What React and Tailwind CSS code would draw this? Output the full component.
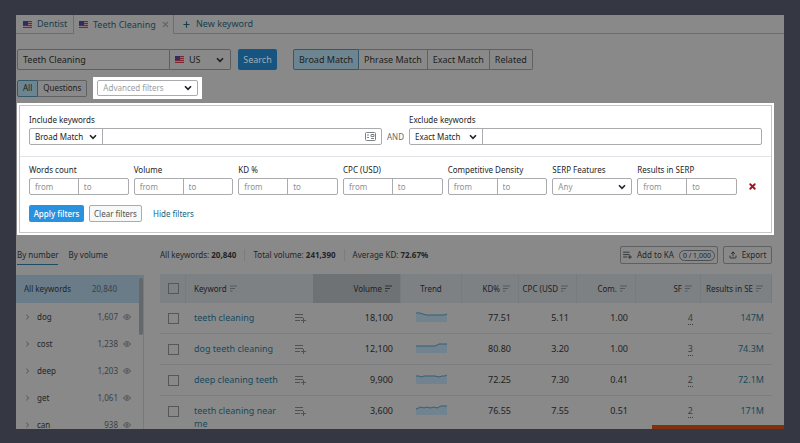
import { X, Plus, Upload } from "lucide-react";
import clsx from "clsx";

const MATCH_TYPES = ["Broad Match", "Phrase Match", "Exact Match", "Related"];

const GROUPS = [
  { name: "dog", count: "1,607" },
  { name: "cost", count: "1,238" },
  { name: "deep", count: "1,203" },
  { name: "get", count: "1,061" },
  { name: "can", count: "938" },
];

const KEYWORDS = [
  {
    keyword: "teeth cleaning",
    volume: "18,100",
    trend: "0,2 4,2 10,4 22,4 28,4 31,3",
    kd: "77.51",
    cpc: "5.11",
    com: "1.00",
    sf: 4,
    results: "147M",
  },
  {
    keyword: "dog teeth cleaning",
    volume: "12,100",
    trend: "0,4 19,4 23,2 31,2",
    kd: "80.80",
    cpc: "3.20",
    com: "1.00",
    sf: 3,
    results: "74.3M",
  },
  {
    keyword: "deep cleaning teeth",
    volume: "9,900",
    trend: "0,3 3,3 5,4 8,3 19,3 23,4 26,3 29,3 31,2",
    kd: "72.25",
    cpc: "7.30",
    com: "0.41",
    sf: 2,
    results: "72.1M",
  },
  {
    keyword: "teeth cleaning near me",
    volume: "3,600",
    trend: "0,5 5,3 8,4 11,3 14,4 18,3 21,4 25,2 31,2",
    kd: "76.55",
    cpc: "7.55",
    com: "0.51",
    sf: 2,
    results: "171M",
  },
];

const Flag = () => (
  <svg width="9" height="7" viewBox="0 0 9 7" className="shrink-0">
    <rect width="9" height="7" fill="#8b7476" />
    <path d="M0 .5h9M0 2.5h9M0 4.5h9M0 6.5h9" stroke="#7c2630" strokeWidth="1" />
    <rect width="5" height="4" fill="#2b2f63" />
  </svg>
);

const Chevron = ({ className }) => (
  <svg
    width="8"
    height="6"
    viewBox="0 0 8 6"
    fill="none"
    stroke="currentColor"
    strokeWidth="1.6"
    className={clsx("pointer-events-none absolute top-1/2 -translate-y-1/2", className)}
  >
    <path d="M1 1.2 4 4.4 7 1.2" />
  </svg>
);

const SortIcon = ({ className }) => (
  <svg
    width="7"
    height="7"
    viewBox="0 0 7 7"
    stroke="currentColor"
    className={clsx("shrink-0", className)}
  >
    <path d="M0 1h7M0 3.5h5M0 6h2.5" strokeWidth="1" />
  </svg>
);

const AddToListIcon = ({ className }) => (
  <svg width="11" height="10" viewBox="0 0 11 10" stroke="currentColor" className={className}>
    <path d="M0 1.5h8M0 4.5h8M0 7.5h5M6 7.5h5M8.5 5v5" strokeWidth="1" />
  </svg>
);

const EyeIcon = () => (
  <svg width="8" height="6" viewBox="0 0 8 6" fill="none" stroke="#4c4f52" strokeWidth=".9">
    <path d="M.5 3C1.5 1.3 2.7.7 4 .7S6.5 1.3 7.5 3C6.5 4.7 5.3 5.3 4 5.3S1.5 4.7.5 3Z" />
    <circle cx="4" cy="3" r="1.1" />
  </svg>
);

const Trend = ({ points }) => (
  <svg width="31" height="11" viewBox="0 0 31 11" className="mx-auto block">
    <polygon points={`0,11 ${points} 31,11`} fill="#70838f" />
    <polyline points={points} fill="none" stroke="#355f74" strokeWidth="1" />
  </svg>
);

const RangeField = ({ label }) => (
  <fieldset className="min-w-0 flex-1">
    <legend className="mb-[2px] text-[8px] leading-3 whitespace-nowrap">{label}</legend>
    <div className="flex h-[17px] rounded-xs border border-[#a9abaf]">
      <input
        aria-label={`${label} from`}
        placeholder="from"
        className="w-1/2 min-w-0 border-r border-[#a9abaf] px-[5px] text-[8px] placeholder:text-[#8e9195]"
      />
      <input
        aria-label={`${label} to`}
        placeholder="to"
        className="w-1/2 min-w-0 px-[5px] text-[8px] placeholder:text-[#8e9195]"
      />
    </div>
  </fieldset>
);

const KeywordsField = ({ id, label, match, icon }) => (
  <div className="min-w-0 flex-1">
    <label htmlFor={id} className="mb-[2px] block text-[8px] leading-3">
      {label}
    </label>
    <div className="flex h-[17px] rounded-xs border border-[#a9abaf]">
      <div className="relative w-[73px] shrink-0 border-r border-[#a9abaf]">
        <select
          aria-label={`${label} match type`}
          className="block h-[15px] w-full appearance-none px-[5px] text-[8px] leading-3"
        >
          <option>{match}</option>
        </select>
        <Chevron className="right-[5px]" />
      </div>
      <div className="relative flex-1">
        <input id={id} className="block h-[15px] w-full px-[5px] text-[8px]" />
        {icon}
      </div>
    </div>
  </div>
);

const HeaderCell = ({ children, active }) => (
  <th
    scope="col"
    className={clsx(
      "border-r border-[#787b7e] pr-2 font-normal",
      active && "bg-[#6f7275]"
    )}
  >
    <div className="flex items-center justify-end gap-[3px]">
      <span className="whitespace-nowrap">{children}</span>
      <SortIcon className={active ? "text-[#303336]" : "text-[#55585b]"} />
    </div>
  </th>
);

const Tabs = () => (
  <nav className="flex h-[19px] shrink-0 text-[9px] text-[#173f4c]">
    <a href="#dentist" className="flex w-[58px] items-center gap-[5px] border-r border-b border-[#6c6e70] pl-[7px]">
      <Flag /> Dentist
    </a>
    <a href="#teeth" className="flex w-[100px] items-center gap-[5px] border-r border-[#6c6e70] pl-[5px] whitespace-nowrap">
      <Flag /> Teeth Cleaning
      <X size={9} strokeWidth={3} className="shrink-0 text-[#636567]" />
    </a>
    <a href="#new" className="flex flex-1 items-center gap-[5px] border-b border-[#6c6e70] pl-2">
      <Plus size={9} strokeWidth={3} /> New keyword
    </a>
  </nav>
);

const SearchBar = () => (
  <div className="mt-[15px] flex h-[21px] text-[9px] text-[#1c1e20]">
    <input
      aria-label="Keyword"
      defaultValue="Teeth Cleaning"
      className="w-[153px] rounded-l-xs border border-[#5c5f61] px-[5px]"
    />
    <div className="relative w-[61px] rounded-r-xs border border-l-0 border-[#5c5f61]">
      <span className="pointer-events-none absolute top-[6px] left-[5px]">
        <Flag />
      </span>
      <select aria-label="Country" className="block h-[19px] w-full appearance-none pl-[19px]">
        <option>US</option>
      </select>
      <Chevron className="right-[6px]" />
    </div>
    <button className="ml-[7px] w-[39px] rounded-xs bg-[#175480] text-[#a3adb4]">Search</button>
    <div className="ml-4 flex">
      {MATCH_TYPES.map((type, i) => (
        <button
          key={type}
          className={clsx(
            "border px-[5px] whitespace-nowrap",
            i === 0
              ? "rounded-l-xs border-[#33586a] bg-[#6d8591]"
              : "border-l-0 border-[#5f6264]",
            i === MATCH_TYPES.length - 1 && "rounded-r-xs"
          )}
        >
          {type}
        </button>
      ))}
    </div>
  </div>
);

const FiltersPanel = () => (
  <section className="mt-1 mr-[10px] border-2 border-white bg-white text-[#222527]">
    <div className="border border-[#c4c6c8]">
      <div className="flex items-end px-[9px] pt-2 pb-[11px]">
        <KeywordsField
          id="include"
          label="Include keywords"
          match="Broad Match"
          icon={
            <svg
              width="11"
              height="9"
              viewBox="0 0 11 9"
              fill="none"
              stroke="#7e8184"
              className="absolute top-[3px] right-[5px]"
            >
              <rect x=".5" y=".5" width="10" height="8" rx="1" />
              <path d="M2 3h2M2 5.5h2M6 2.5h3v2H6zM6 6.5h3" />
            </svg>
          }
        />
        <span className="w-[27px] text-center text-[8px] leading-[17px] text-[#66696c]">AND</span>
        <KeywordsField id="exclude" label="Exclude keywords" match="Exact Match" />
      </div>
      <div className="border-t border-[#e3e4e5] px-[9px] pt-[7px] pb-[10px]">
        <div className="flex items-end gap-[5px]">
          <RangeField label="Words count" />
          <RangeField label="Volume" />
          <RangeField label="KD %" />
          <RangeField label="CPC (USD)" />
          <RangeField label="Competitive Density" />
          <div className="w-20">
            <label htmlFor="serp" className="mb-[2px] block text-[8px] leading-3">
              SERP Features
            </label>
            <div className="relative h-[17px]">
              <select
                id="serp"
                className="block h-[17px] w-full appearance-none rounded-xs border border-[#a9abaf] px-[5px] text-[8px] leading-3 text-[#8e9195]"
              >
                <option>Any</option>
              </select>
              <Chevron className="right-[6px]" />
            </div>
          </div>
          <RangeField label="Results in SERP" />
          <button
            aria-label="Remove filters"
            className="flex h-[17px] w-5 items-center justify-center text-[#a01622]"
          >
            <X size={9} strokeWidth={5} />
          </button>
        </div>
        <div className="mt-[10px] flex h-[17px] items-stretch text-[8px]">
          <button className="w-[55px] rounded-xs bg-[#2891e0] font-medium text-white">
            Apply filters
          </button>
          <button className="ml-[5px] w-[53px] rounded-xs border border-[#a9abaf] bg-[#f7f8f8] text-[#4e5154]">
            Clear filters
          </button>
          <button className="ml-[11px] text-[#14647c]">Hide filters</button>
        </div>
      </div>
    </div>
  </section>
);

const GroupsList = () => (
  <aside className="w-32 shrink-0 text-[8px] text-[#232527]">
    <div className="flex gap-[10px] pl-px leading-[18px]">
      <button className="border-b border-[#1d4d62]">By number</button>
      <button className="border-b border-transparent">By volume</button>
    </div>
    <div className="relative mt-[10px] border-r border-[#77797b]">
      <div className="flex h-7 items-center bg-[#6a7c88] pr-[26px] pl-2">
        <span>All keywords</span>
        <span className="ml-auto text-[#3c4043]">20,840</span>
      </div>
      <span className="absolute top-[3px] right-0 h-[57px] w-1 rounded-full bg-[#65686b]" />
      <ul>
        {GROUPS.map((group) => (
          <li key={group.name} className="flex h-[27px] items-center pr-3 pl-[10px]">
            <svg width="3" height="6" viewBox="0 0 3 6" fill="none" stroke="#505356">
              <path d="M.3.5 2.5 3 .3 5.5" />
            </svg>
            <span className="ml-2">{group.name}</span>
            <span className="mr-[5px] ml-auto text-[#3c4043]">{group.count}</span>
            <EyeIcon />
          </li>
        ))}
      </ul>
    </div>
  </aside>
);

const Summary = () => (
  <div className="flex items-center text-[8px] text-[#232527]">
    <p>
      All keywords: <b>20,840</b>
    </p>
    <p className="ml-2 border-l border-[#7b7d7f] pl-2">
      Total volume: <b>241,390</b>
    </p>
    <p className="ml-2 border-l border-[#7b7d7f] pl-2">
      Average KD: <b>72.67%</b>
    </p>
    <button className="ml-auto flex h-[18px] w-[98px] items-center justify-center gap-[5px] rounded-xs border border-[#5d6062] whitespace-nowrap">
      <AddToListIcon className="h-2 w-[9px]" />
      Add to KA
      <span className="rounded-full border border-[#4c4f51] px-[3px] text-[7px] leading-[9px]">
        0 / 1,000
      </span>
    </button>
    <button className="ml-[5px] flex h-[18px] w-[49px] items-center justify-center gap-[5px] rounded-xs border border-[#5d6062]">
      <Upload size={8} strokeWidth={2.5} />
      Export
    </button>
  </div>
);

const KeywordsTable = () => (
  <table className="mt-[10px] w-full table-fixed border-separate border-spacing-0 text-right text-[9px] text-[#1d1f21]">
    <colgroup>
      <col className="w-[26px]" />
      <col />
      <col className="w-[88px]" />
      <col className="w-[61px]" />
      <col className="w-[57px]" />
      <col className="w-[58px]" />
      <col className="w-[59px]" />
      <col className="w-[65px]" />
      <col className="w-[71px]" />
    </colgroup>
    <thead>
      <tr className="h-[29px] bg-[#7d8184] text-[8px]">
        <th className="border-r border-[#787b7e] pl-2">
          <input
            type="checkbox"
            aria-label="Select all"
            className="block size-[11px] appearance-none border border-[#55585a]"
          />
        </th>
        <th scope="col" className="pl-2 font-normal">
          <div className="flex items-center gap-[3px]">
            Keyword <SortIcon className="text-[#55585b]" />
          </div>
        </th>
        <HeaderCell active>Volume</HeaderCell>
        <th scope="col" className="border-r border-[#787b7e] text-center font-normal">
          Trend
        </th>
        <HeaderCell>KD%</HeaderCell>
        <HeaderCell>CPC (USD</HeaderCell>
        <HeaderCell>Com.</HeaderCell>
        <HeaderCell>SF</HeaderCell>
        <HeaderCell>Results in SE</HeaderCell>
      </tr>
    </thead>
    <tbody>
      {KEYWORDS.map((row) => (
        <tr
          key={row.keyword}
          className="h-[31px] align-top leading-[13px] [&>td]:border-b [&>td]:border-[#7b7d7f]"
        >
          <td className="pt-[10px] pl-2">
            <input
              type="checkbox"
              aria-label={`Select ${row.keyword}`}
              className="block size-[11px] appearance-none border border-[#55585a]"
            />
          </td>
          <td className="pt-2 pl-2 text-left">
            <div className="flex items-start justify-between pr-[7px]">
              <a href="#keyword" className="max-w-[88px] text-[#174a5c]">
                {row.keyword}
              </a>
              <AddToListIcon className="mt-[2px] shrink-0 text-[#505356]" />
            </div>
          </td>
          <td className="pt-2 pr-2">{row.volume}</td>
          <td className="pt-2">
            <Trend points={row.trend} />
          </td>
          <td className="pt-2 pr-2">{row.kd}</td>
          <td className="pt-2 pr-2">{row.cpc}</td>
          <td className="pt-2 pr-2">{row.com}</td>
          <td className="pt-2 pr-2 text-[#3b3e41]">
            <span className="border-b border-dotted border-[#3b3e41]">{row.sf}</span>
          </td>
          <td className="pt-2 pr-2">
            <a href="#serp" className="text-[#174a5c]">
              {row.results}
            </a>
          </td>
        </tr>
      ))}
    </tbody>
  </table>
);

export default function App() {
  return (
    <div className="h-screen bg-[#353842] px-4 pt-[15px] pb-[14px] font-['Noto_Sans','Open_Sans',sans-serif] leading-3">
      <main className="relative h-full overflow-hidden bg-[#898989]">
        <Tabs />
        <div className="pl-px">
          <SearchBar />
          <div className="mt-[7px] flex items-center text-[8px] text-[#1c1e20]">
            <button className="h-[17px] rounded-l-xs border border-[#33586a] bg-[#6d8591] px-[5px]">
              All
            </button>
            <button className="h-[17px] rounded-r-xs border border-l-0 border-[#5f6264] px-[5px]">
              Questions
            </button>
            <div className="ml-[6px] bg-white px-1 py-[3px]">
              <div className="relative h-[16px] w-[101px]">
                <select
                  aria-label="Advanced filters"
                  className="block h-[16px] w-full appearance-none rounded-xs border border-[#a9abaf] px-[5px] leading-3 text-[#9b9da0]"
                >
                  <option>Advanced filters</option>
                </select>
                <Chevron className="right-[6px] text-[#1c1e20]" />
              </div>
            </div>
          </div>
          <FiltersPanel />
        </div>
        <div className="mt-[11px] flex gap-4 pr-3">
          <GroupsList />
          <div className="min-w-0 flex-1">
            <Summary />
            <KeywordsTable />
          </div>
        </div>
        <div className="absolute right-0 bottom-0 h-1 w-[132px] bg-[#80310c]" />
      </main>
    </div>
  );
}
